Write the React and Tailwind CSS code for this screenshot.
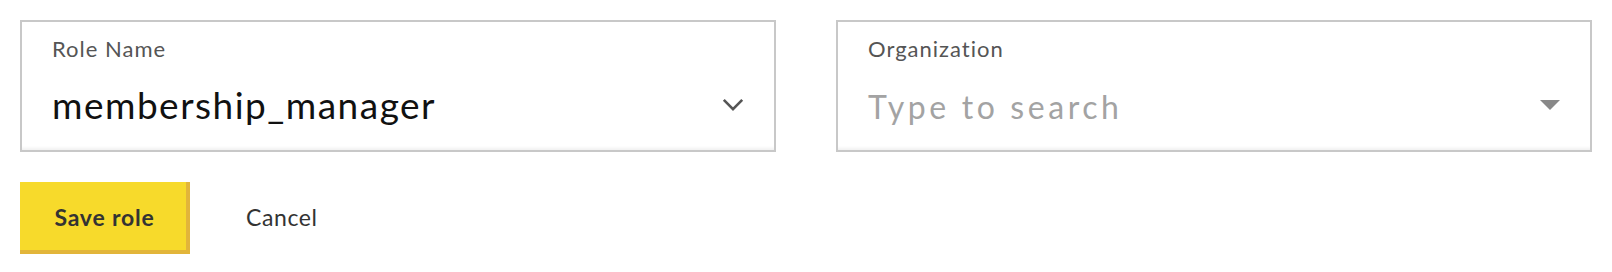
import React from "react";

function Chevron() {
  return (
    <svg width="22" height="14" viewBox="0 0 22 14" className="shrink-0">
      <polyline points="1.8,1.8 11,11.2 20.2,1.8" fill="none" stroke="#555555" strokeWidth="2.6" strokeLinecap="butt" strokeLinejoin="miter" />
    </svg>
  );
}

function Caret() {
  return (
    <svg width="20" height="10" viewBox="0 0 20 10" className="shrink-0">
      <polygon points="0,0 20,0 10,10" fill="#888888" />
    </svg>
  );
}

function Field({ label, children, icon }) {
  return (
    <div className="h-[132px] border-2 border-[#c8c8c8] bg-white shadow-[inset_0_-4px_3px_-2px_rgba(0,0,0,0.06)] pl-[30px] pr-[30px] pt-[13px] flex flex-col">
      <div className="text-[22px] leading-[28px] tracking-[1px] text-[#555555]">{label}</div>
      <div className="mt-[17px] flex items-center justify-between h-[50px]">
        {children}
        {icon}
      </div>
    </div>
  );
}

export default function App() {
  return (
    <div className="w-[1612px] h-[272px] bg-white p-5 font-['Lato','Liberation_Sans',sans-serif]">
      <div className="grid grid-cols-2 gap-[60px]">
        <Field label="Role Name" icon={<Chevron />}>
          <span className="text-[37px] leading-[50px] tracking-[1.5px] text-[#111111]">membership_manager</span>
        </Field>
        <Field label="Organization" icon={<Caret />}>
          <span className="text-[32px] leading-[50px] tracking-[3.6px] text-[#a3a3a3] pt-[4px]">Type to search</span>
        </Field>
      </div>
      <div className="mt-[30px] flex items-center">
        <button className="w-[170px] h-[72px] bg-[#f7da2b] border-r-4 border-b-4 border-[#e2b53a] text-[23px] font-bold tracking-[0.8px] text-[#333333] pl-[3px] pt-[2px]">
          Save role
        </button>
        <button className="ml-[56px] text-[23px] tracking-[0.6px] text-[#333333] pb-[1px]">Cancel</button>
      </div>
    </div>
  );
}
